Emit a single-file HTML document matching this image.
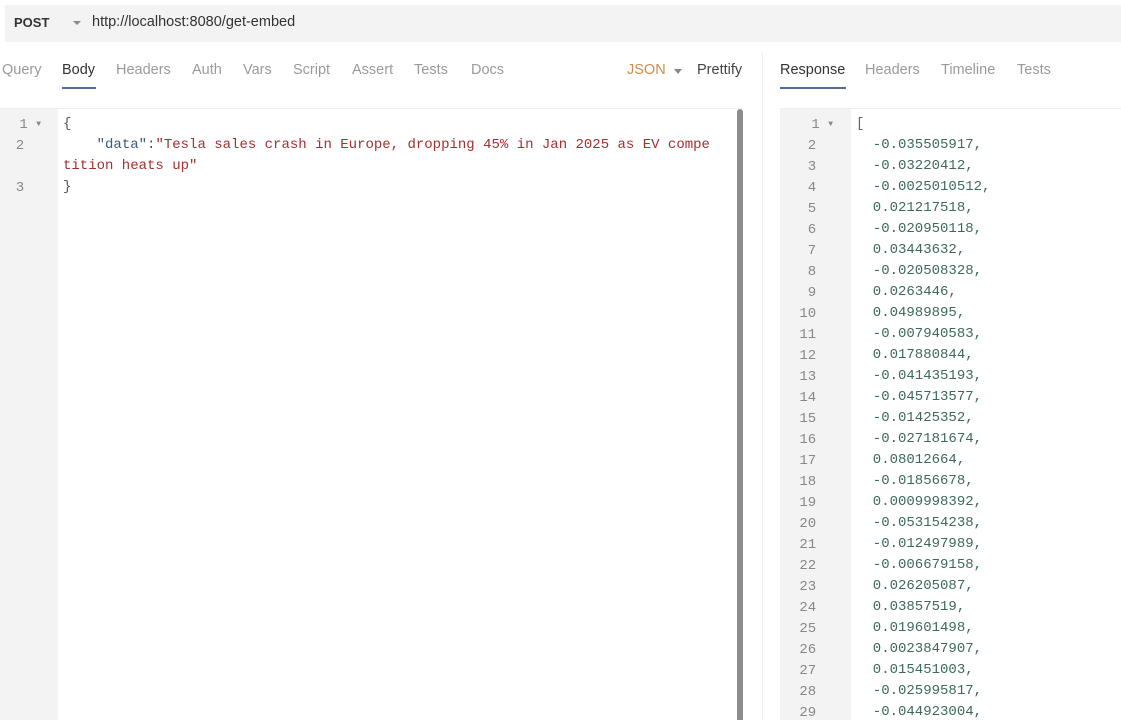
<!DOCTYPE html>
<html><head><style>
*{margin:0;padding:0;box-sizing:border-box}
body{width:1121px;height:720px;background:#fff;position:relative;overflow:hidden;font-family:"Liberation Sans",sans-serif}
.top{position:absolute;left:5px;top:5px;width:1116px;height:37px;background:#f3f3f3}
.abs{position:absolute;white-space:pre}
.tab{position:absolute;top:62px;font-size:14.5px;color:#9a9a9a}
.mono{font-family:"Liberation Mono",monospace;font-size:14px;line-height:21px}
.tri{font-size:8px;vertical-align:2px}
</style></head><body>
<div class="top"></div>
<div class="abs" style="left:14px;top:15px;font-size:13px;font-weight:bold;color:#333">POST</div>
<div class="abs" style="left:73px;top:21px;width:0;height:0;border-left:4px solid transparent;border-right:4px solid transparent;border-top:4px solid #888"></div>
<div class="abs" style="left:92px;top:14px;font-size:14.5px;color:#333">http://localhost:8080/get-embed</div>

<div class="tab" style="left:2px">Query</div>
<div class="tab" style="left:62px;color:#333">Body</div>
<div class="abs" style="left:62px;top:87px;width:34px;height:2px;background:#546a96"></div>
<div class="tab" style="left:116px">Headers</div>
<div class="tab" style="left:192px">Auth</div>
<div class="tab" style="left:243px">Vars</div>
<div class="tab" style="left:293px">Script</div>
<div class="tab" style="left:352px">Assert</div>
<div class="tab" style="left:414px">Tests</div>
<div class="tab" style="left:471px">Docs</div>
<div class="tab" style="left:627px;color:#d08a4a">JSON</div>
<div class="abs" style="left:674px;top:69px;width:0;height:0;border-left:4px solid transparent;border-right:4px solid transparent;border-top:5px solid #888"></div>
<div class="tab" style="left:697px;color:#444">Prettify</div>

<div class="tab" style="left:780px;color:#333">Response</div>
<div class="abs" style="left:780px;top:87px;width:66px;height:2px;background:#546a96"></div>
<div class="tab" style="left:865px">Headers</div>
<div class="tab" style="left:941px">Timeline</div>
<div class="tab" style="left:1017px">Tests</div>

<div class="abs" style="left:0;top:108px;width:742px;height:1px;background:#eee"></div>
<div class="abs" style="left:0;top:109px;width:58px;height:611px;background:#f3f3f3"></div>
<div class="abs" style="left:737px;top:109px;width:6px;height:611px;background:#8c8c8c;border-radius:3px 3px 0 0"></div>
<div class="abs" style="left:762px;top:52px;width:1px;height:668px;background:#eee"></div>

<div class="abs mono" style="left:0;top:114px;width:41px;text-align:right;color:#888">1 <span class="tri">▼</span>
2  

3  </div>
<div class="abs mono" style="left:63px;top:114px;color:#555">{
    <span style="color:#3a5a7f">"data"</span>:<span style="color:#a33030">"Tesla sales crash in Europe, dropping 45% in Jan 2025 as EV compe</span>
<span style="color:#a33030">tition heats up"</span>
}</div>

<div class="abs" style="left:780px;top:108px;width:341px;height:1px;background:#eee"></div>
<div class="abs" style="left:780px;top:109px;width:71px;height:611px;background:#f3f3f3"></div>
<div class="abs mono" style="left:780px;top:114px;width:53px;text-align:right;color:#888">1 <span class="tri">▼</span>
2  
3  
4  
5  
6  
7  
8  
9  
10  
11  
12  
13  
14  
15  
16  
17  
18  
19  
20  
21  
22  
23  
24  
25  
26  
27  
28  
29  </div>
<div class="abs mono" style="left:856px;top:114px;color:#3d6a58"><span style="color:#666">[</span>
  -0.035505917,
  -0.03220412,
  -0.0025010512,
  0.021217518,
  -0.020950118,
  0.03443632,
  -0.020508328,
  0.0263446,
  0.04989895,
  -0.007940583,
  0.017880844,
  -0.041435193,
  -0.045713577,
  -0.01425352,
  -0.027181674,
  0.08012664,
  -0.01856678,
  0.0009998392,
  -0.053154238,
  -0.012497989,
  -0.006679158,
  0.026205087,
  0.03857519,
  0.019601498,
  0.0023847907,
  0.015451003,
  -0.025995817,
  -0.044923004,</div>
</body></html>
